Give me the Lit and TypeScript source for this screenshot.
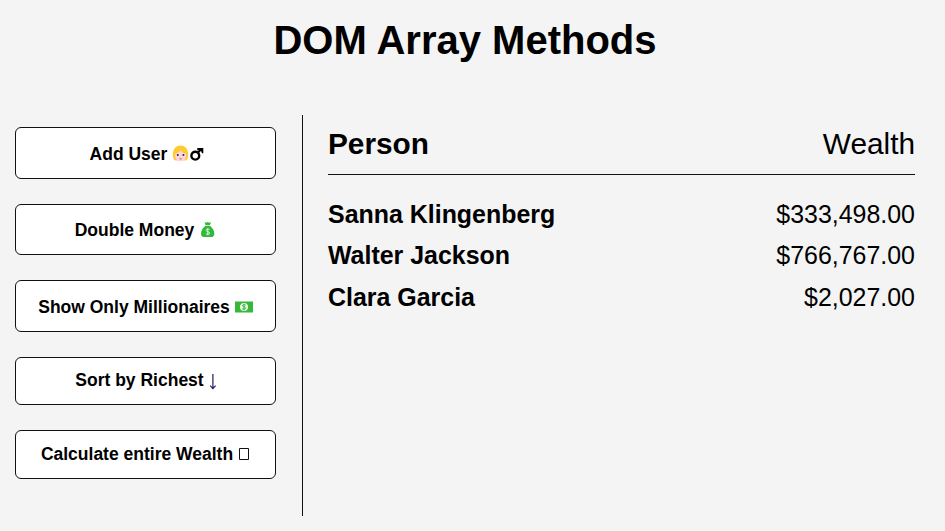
import { LitElement, html, css } from "lit";
import { customElement } from "lit/decorators.js";

const people = [
  ["Sanna Klingenberg", "$333,498.00"],
  ["Walter Jackson", "$766,767.00"],
  ["Clara Garcia", "$2,027.00"],
];

const userIcon = html`<svg width="32" height="20" viewBox="0 0 32 20">
  <g transform="translate(-.5 1)">
    <path d="M9 .6C4 .6 1.300 4.700 1.300 10c0 3.500 1.200 5.500 3.200 5.500h9c2 0 3.200-2 3.200-5.500C16.700 4.700 14 .6 9 .6z" fill="#ffcb2e"/>
    <path d="M3.500 8.800c2.600-.4 4.200-1.600 5.200-3.200 1.400 1.600 3.400 2.800 6 3.200.6 4.500-2.200 7.600-5.600 7.600S2.900 13.300 3.500 8.800z" fill="#fcd6e0"/>
    <circle cx="6.300" cy="10" r="1.050" fill="#302c3b"/><circle cx="11.900" cy="10" r="1.050" fill="#302c3b"/>
    <path d="M7.500 13.400h3.400q-1.700 2.300-3.400 0z" fill="#d8424e"/>
  </g>
  <ellipse cx="23.300" cy="11.700" rx="3.900" ry="3.900" fill="none" stroke="#000" stroke-width="2.400"/>
  <path d="M25.600 9l3.700-4" stroke="#000" stroke-width="2"/><path d="M25.300 4h6v5.200h-1.300L28.700 6.200H25.300z" fill="#000"/>
</svg>`;
const bagIcon = html`<svg width="17" height="18" viewBox="0 0 17 18">
  <path d="M5.400 1.200l1.800.6L8.700 1l1.600.8 1.800-.6-1.200 3.100H6.600z" fill="#32b93a"/>
  <path d="M6.200 4.900h5c2.600 2 4.100 4.900 4.100 7.600 0 2.600-1.300 3.600-3.300 3.600H5.300c-2 0-3.300-1-3.300-3.600 0-2.700 1.600-5.600 4.200-7.600z" fill="#32b93a"/>
  <path d="M10.400 8.600C9.600 7.800 7.100 7.800 7.100 9.300c0 1.800 3.500 1.100 3.500 2.800 0 1.500-2.700 1.600-3.700.6M8.800 7v7.200" fill="none" stroke="#e4f8e4" stroke-width=".9"/>
</svg>`;
const cashIcon = html`<svg width="18" height="12" viewBox="0 0 18 12">
  <path d="M0 .5h18v11H0z" fill="#37b839"/><circle cx="9" cy="6" r="4" fill="#e8f9e8"/>
  <path d="M10.700 4.200C9.700 3.300 7.500 3.500 7.500 4.700c0 1.400 3.100 1 3.100 2.400 0 1.300-2.200 1.500-3.400.6M9 2.700v6.600" fill="none" stroke="#37b839" stroke-width="1"/>
</svg>`;
const arrowIcon = html`<svg width="9" height="18" viewBox="0 0 9 18">
  <path d="M3.900 1v14M1.200 12.600l2.700 3 2.700-3" fill="none" stroke="#20205c" stroke-width="1.200"/>
</svg>`;
const boxIcon = html`<svg width="12" height="14" viewBox="0 0 12 14">
  <path d="M1.500 1.500h9v11h-9z" fill="none" stroke="#111" stroke-width="1"/>
</svg>`;

const actions = [
  ["add", "Add User", userIcon],
  ["double", "Double Money", bagIcon],
  ["filter", "Show Only Millionaires", cashIcon],
  ["sort", "Sort by Richest", arrowIcon],
  ["total", "Calculate entire Wealth", boxIcon],
];

@customElement("app-root")
class AppRoot extends LitElement {
  static styles = css`
    :host { display: block; box-sizing: border-box; height: 531px; background: #f4f4f4; color: #000; font-family: "Liberation Sans", Arial, sans-serif; overflow: hidden; }
    * { box-sizing: border-box; }
    h1 { margin: 0; padding-top: 17px; height: 115px; width: 930px; text-align: center; font-size: 40px; line-height: 47px; white-space: nowrap; }
    main { display: flex; height: 401px; padding-left: 15px; }
    aside { width: 288px; padding: 12px 26px 0 0; border-right: 1px solid #111; display: flex; flex-direction: column; gap: 25px; }
    button { display: flex; align-items: center; justify-content: center; gap: 5px; width: 261px; border: 1px solid #111; border-radius: 6px; background: #fff; color: #000; font: bold 17.5px/20px "Liberation Sans", Arial, sans-serif; padding: 0; white-space: nowrap; flex: none; }
    svg { display: block; flex: none; }
    .add, .filter { height: 52px; padding-top: 1px; }
    .add { padding-left: 3px; }
    .double { height: 51px; }
    .sort { height: 48px; padding-bottom: 2px; padding-left: 2px; }
    .sort svg { margin-top: 3px; }
    .total { height: 49px; padding-bottom: 1px; }
    section { width: 612px; padding-left: 25px; }
    .row, header { display: flex; justify-content: space-between; align-items: center; }
    header { height: 60px; padding-bottom: 2px; border-bottom: 1px solid #111; font-size: 29.800px; margin-bottom: 18.700px; }
    .row { height: 41.400px; font-size: 24.950px; }
  `;
  render() {
    return html`
      <h1>DOM Array Methods</h1>
      <main>
        <aside>
          ${actions.map(([c, label, icon]) => html`<button class=${c}><span>${label}</span>${icon}</button>`)}
        </aside>
        <section>
          <header><strong>Person</strong><span>Wealth</span></header>
          ${people.map(([n, w]) => html`<div class="row"><strong>${n}</strong><span>${w}</span></div>`)}
        </section>
      </main>`;
  }
}
